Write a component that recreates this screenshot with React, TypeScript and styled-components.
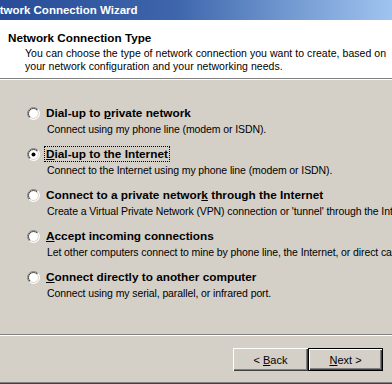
import React from "react";
import styled, { createGlobalStyle } from "styled-components";

const Global = createGlobalStyle`
  html, body { margin: 0; padding: 0; background: #D4D0C8; }
  body { font-family: "Liberation Sans", Arial, sans-serif; font-size: 10.5px; letter-spacing: -0.1px; color: #000; }
`;

const Window = styled.div`
  width: 392px;
  height: 384px;
  background: #D4D0C8;
  display: flex;
  flex-direction: column;
  overflow: hidden;
`;

const TitleBar = styled.div`
  height: 20px;
  flex: none;
  background: linear-gradient(to right, #284C98 0%, #3E66AC 45%, #6F96CE 72%, #A0C4F0 100%);
  display: flex;
  align-items: center;
  overflow: hidden;
`;

const TitleText = styled.span`
  margin-left: -15px;
  color: #fff;
  font-weight: bold;
  font-size: 11.5px;
  letter-spacing: 0;
  white-space: nowrap;
`;

const Header = styled.div`
  height: 58px;
  flex: none;
  background: #fff;
  box-sizing: border-box;
  padding-top: 11px;
  white-space: nowrap;
`;

const HeaderTitle = styled.div`
  padding-left: 8px;
  font-weight: bold;
  font-size: 11.7px;
  letter-spacing: 0;
  line-height: 14px;
`;

const HeaderDesc = styled.div`
  margin-top: 2px;
  padding-left: 25px;
  line-height: 13px;
  letter-spacing: 0.05px;
`;

const Separator = styled.div`
  flex: none;
  height: 0;
  border-top: 1px solid #808080;
  border-bottom: 1px solid #fff;
`;

const Body = styled.div`
  flex: 1;
  box-sizing: border-box;
  padding: 25px 0 0 27px;
  display: flex;
  flex-direction: column;
  gap: 10px;
  white-space: nowrap;
`;

const Option = styled.div`
  display: flex;
  flex-direction: column;
  gap: 2px;
`;

const LabelRow = styled.div`
  display: flex;
  align-items: center;
  gap: 6px;
  height: 16px;
`;

const Label = styled.span<{ $focused?: boolean }>`
  font-weight: bold;
  font-size: 11.8px;
  letter-spacing: 0;
  line-height: 14px;
  outline: ${(p) => (p.$focused ? "1px dotted #000" : "none")};
  padding: 0 1px;
  margin-left: -1px;
`;

const Desc = styled.div`
  padding-left: 20px;
  line-height: 13px;
`;

const Footer = styled.div`
  flex: none;
  height: 46px;
  box-sizing: border-box;
  padding: 12px 9px 0 0;
  display: flex;
  justify-content: flex-end;
  align-items: flex-start;
`;

const Button = styled.div<{ $default?: boolean }>`
  width: 75px;
  height: 23px;
  box-sizing: border-box;
  display: flex;
  align-items: center;
  justify-content: center;
  background: #D4D0C8;
  border: ${(p) => (p.$default ? "1px solid #000" : "0")};
  box-shadow: inset 1px 1px 0 #fff, inset -1px -1px 0 #404040, inset -2px -2px 0 #808080;
  font-size: 11px;
  letter-spacing: 0;
  white-space: pre;
`;

const BottomFrame = styled.div`
  flex: none;
  height: 0;
  border-top: 1px solid #808080;
  border-bottom: 1px solid #404040;
`;

const Radio = ({ checked, id }: { checked?: boolean; id: string }) => (
  <svg width="13" height="13" viewBox="0 0 13 13" style={{ flex: "none" }}>
    <defs>
      <linearGradient id={`o${id}`} x1="0" y1="0" x2="1" y2="1">
        <stop offset="0.5" stopColor="#808080" />
        <stop offset="0.5" stopColor="#ffffff" />
      </linearGradient>
      <linearGradient id={`i${id}`} x1="0" y1="0" x2="1" y2="1">
        <stop offset="0.5" stopColor="#404040" />
        <stop offset="0.5" stopColor="#D4D0C8" />
      </linearGradient>
    </defs>
    <circle cx="6.5" cy="6.5" r="6" fill="#fff" stroke={`url(#o${id})`} strokeWidth="1" />
    <circle cx="6.5" cy="6.5" r="5" fill="#fff" stroke={`url(#i${id})`} strokeWidth="1" />
    {checked && <circle cx="6.5" cy="6.5" r="2" fill="#000" />}
  </svg>
);

type Opt = { label: React.ReactNode; desc: string; checked?: boolean };

const options: Opt[] = [
  {
    label: (
      <>
        Dial-up to <u>p</u>rivate network
      </>
    ),
    desc: "Connect using my phone line (modem or ISDN).",
  },
  {
    label: (
      <>
        <u>D</u>ial-up to the Internet
      </>
    ),
    desc: "Connect to the Internet using my phone line (modem or ISDN).",
    checked: true,
  },
  {
    label: (
      <>
        Connect to a private networ<u>k</u> through the Internet
      </>
    ),
    desc: "Create a Virtual Private Network (VPN) connection or 'tunnel' through the Internet.",
  },
  {
    label: (
      <>
        <u>A</u>ccept incoming connections
      </>
    ),
    desc: "Let other computers connect to mine by phone line, the Internet, or direct cable.",
  },
  {
    label: (
      <>
        <u>C</u>onnect directly to another computer
      </>
    ),
    desc: "Connect using my serial, parallel, or infrared port.",
  },
];

export default function App() {
  return (
    <>
      <Global />
      <Window>
        <TitleBar>
          <TitleText>Network Connection Wizard</TitleText>
        </TitleBar>
        <Header>
          <HeaderTitle>Network Connection Type</HeaderTitle>
          <HeaderDesc>
            You can choose the type of network connection you want to create, based on
            <br />
            your network configuration and your networking needs.
          </HeaderDesc>
        </Header>
        <Separator />
        <Body>
          {options.map((o, i) => (
            <Option key={i}>
              <LabelRow>
                <Radio checked={o.checked} id={String(i)} />
                <Label $focused={o.checked}>{o.label}</Label>
              </LabelRow>
              <Desc>{o.desc}</Desc>
            </Option>
          ))}
        </Body>
        <Separator />
        <Footer>
          <Button>
            {"< "}
            <u>B</u>ack
          </Button>
          <Button $default>
            <u>N</u>ext{" >"}
          </Button>
        </Footer>
        <BottomFrame />
      </Window>
    </>
  );
}
